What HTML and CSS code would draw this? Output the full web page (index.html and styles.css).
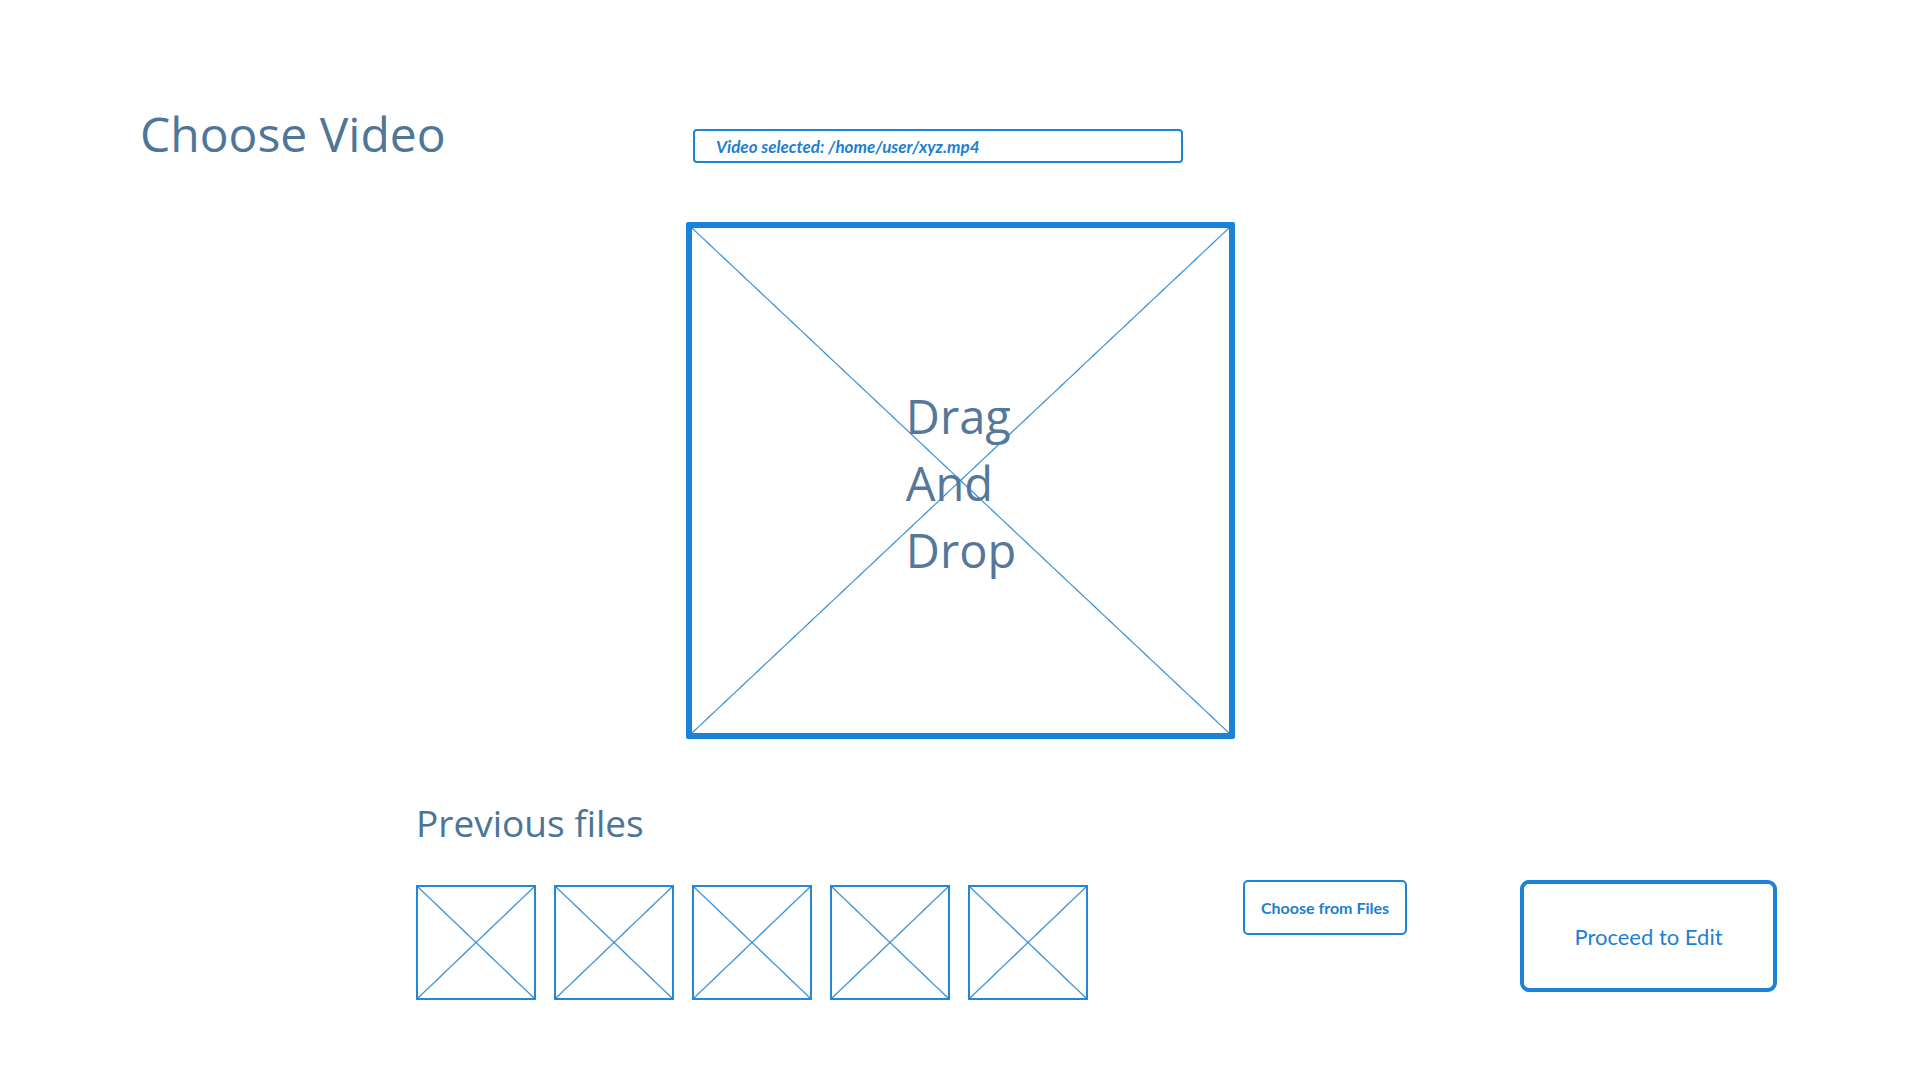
FILE: index.html
```html
<!DOCTYPE html>
<html lang="en">
<head>
<meta charset="utf-8">
<title>Choose Video</title>
<link rel="stylesheet" href="styles.css">
</head>
<body>
<div class="page">
  <header class="top">
    <h1 class="title">Choose Video</h1>
    <div class="path-box">Video selected: /home/user/xyz.mp4</div>
  </header>

  <section class="dropzone">
    <div class="drop-text">Drag<br>And<br>Drop</div>
  </section>

  <section class="bottom">
    <h2 class="subtitle">Previous files</h2>
    <div class="row">
      <div class="thumbs">
        <div class="thumb"></div>
        <div class="thumb"></div>
        <div class="thumb"></div>
        <div class="thumb"></div>
        <div class="thumb"></div>
      </div>
      <button class="btn btn-files">Choose from Files</button>
      <button class="btn btn-proceed">Proceed to Edit</button>
    </div>
  </section>
</div>
</body>
</html>
```
FILE: styles.css
```css
* { box-sizing: border-box; }
html, body { margin: 0; padding: 0; background: #fff; }
body { width: 1920px; height: 1080px; overflow: hidden; font-family: "Open Sans", "Noto Sans", sans-serif; }

.page { width: 1920px; }

.top {
  display: flex;
  align-items: flex-start;
  padding-left: 140px;
}
.title {
  margin: 105px 0 0 0;
  width: 553px;
  font-size: 48px;
  line-height: 58px;
  font-weight: 400;
  color: #4e7699;
}
.path-box {
  margin-top: 129px;
  width: 490px;
  height: 34px;
  border: 2px solid #1d83d7;
  border-radius: 4px;
  padding-left: 21px;
  font-family: Lato, "Open Sans", sans-serif;
  font-style: italic;
  font-weight: 700;
  font-size: 17px;
  line-height: 31px;
  color: #1c7fd3;
}

.dropzone {
  margin: 59px auto 0 auto;
  width: 549px;
  height: 517px;
  border: 6px solid #1a83d9;
  border-radius: 2px;
  background:
    linear-gradient(to top right, transparent calc(50% - 1.1px), #2186d8 50%, transparent calc(50% + 1.1px)),
    linear-gradient(to bottom right, transparent calc(50% - 1.1px), #2186d8 50%, transparent calc(50% + 1.1px));
  display: flex;
  align-items: center;
  justify-content: center;
}
.drop-text {
  text-align: left;
  font-size: 47px;
  line-height: 67px;
  color: #55789a;
  margin: 6px 0 0 2px;
}

.bottom {
  padding-left: 416px;
  margin-top: 62px;
}
.subtitle {
  margin: 0;
  font-size: 37px;
  line-height: 44px;
  font-weight: 500;
  color: #4a7599;
}
.row {
  display: flex;
  align-items: flex-start;
  margin-top: 35px;
}
.thumbs {
  display: flex;
  gap: 18px;
  margin-top: 5px;
}
.thumb {
  width: 120px;
  height: 115px;
  border: 2px solid #2587d8;
  background:
    linear-gradient(to top right, transparent calc(50% - 1.2px), #2587d8 50%, transparent calc(50% + 1.2px)),
    linear-gradient(to bottom right, transparent calc(50% - 1.2px), #2587d8 50%, transparent calc(50% + 1.2px));
}
.btn {
  background: #fff;
  color: #1c7fd3;
  font-family: Lato, "Open Sans", sans-serif;
  padding: 0;
  cursor: pointer;
}
.btn-files {
  margin-left: 155px;
  width: 164px;
  height: 55px;
  border: 2px solid #1d83d7;
  border-radius: 5px;
  font-weight: 700;
  font-size: 16px;
}
.btn-proceed {
  margin-left: 113px;
  width: 257px;
  height: 112px;
  border: 4px solid #1a83d9;
  border-radius: 9px;
  font-weight: 400;
  font-size: 22px;
}
```
